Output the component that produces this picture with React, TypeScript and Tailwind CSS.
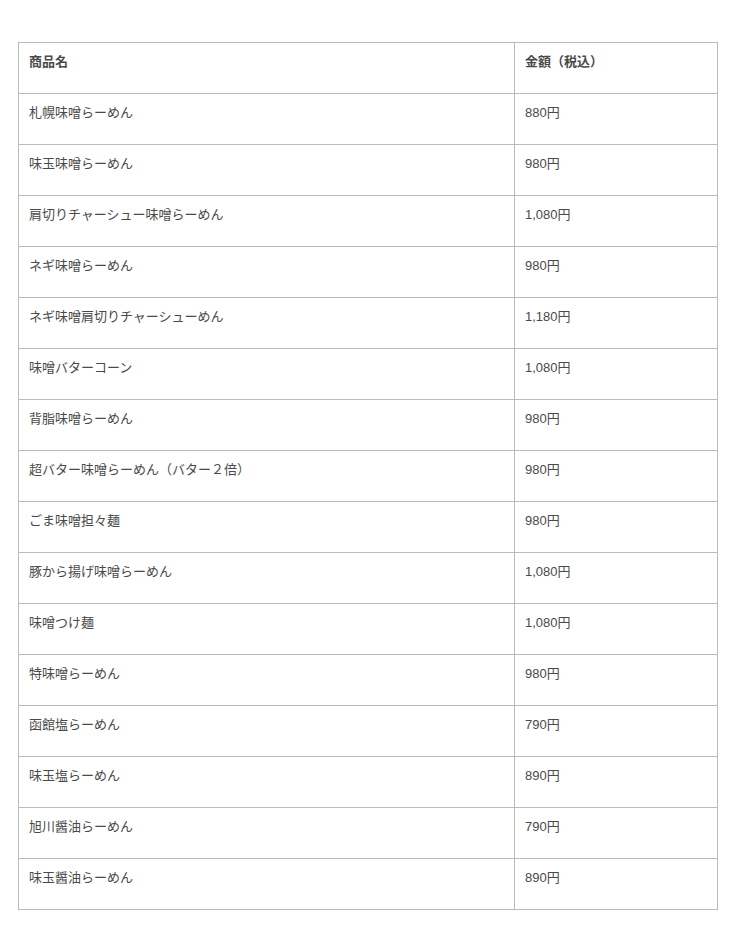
const rows: [string, string][] = [
  ["札幌味噌らーめん", "880円"],
  ["味玉味噌らーめん", "980円"],
  ["肩切りチャーシュー味噌らーめん", "1,080円"],
  ["ネギ味噌らーめん", "980円"],
  ["ネギ味噌肩切りチャーシューめん", "1,180円"],
  ["味噌バターコーン", "1,080円"],
  ["背脂味噌らーめん", "980円"],
  ["超バター味噌らーめん（バター２倍）", "980円"],
  ["ごま味噌担々麺", "980円"],
  ["豚から揚げ味噌らーめん", "1,080円"],
  ["味噌つけ麺", "1,080円"],
  ["特味噌らーめん", "980円"],
  ["函館塩らーめん", "790円"],
  ["味玉塩らーめん", "890円"],
  ["旭川醤油らーめん", "790円"],
  ["味玉醤油らーめん", "890円"],
];

export default function App() {
  return (
    <main
      className="min-h-screen bg-white pt-[42px] pl-[18px]"
      style={{ fontFamily: '"Liberation Sans", "Noto Sans CJK JP", sans-serif' }}
    >
      <table className="w-[700px] border-collapse text-[13px] leading-[20px] text-[#4a4a4a]">
        <thead>
          <tr>
            <th className="h-[51px] w-[496px] border border-[#bbb] px-[10px] pt-[9px] text-left align-top font-bold">
              商品名
            </th>
            <th className="h-[51px] border border-[#bbb] px-[10px] pt-[9px] text-left align-top font-bold">
              金額（税込）
            </th>
          </tr>
        </thead>
        <tbody>
          {rows.map(([name, price]) => (
            <tr key={name}>
              <td className="h-[51px] border border-[#bbb] px-[10px] pt-[9px] align-top">{name}</td>
              <td className="h-[51px] border border-[#bbb] px-[10px] pt-[9px] align-top">{price}</td>
            </tr>
          ))}
        </tbody>
      </table>
    </main>
  );
}
